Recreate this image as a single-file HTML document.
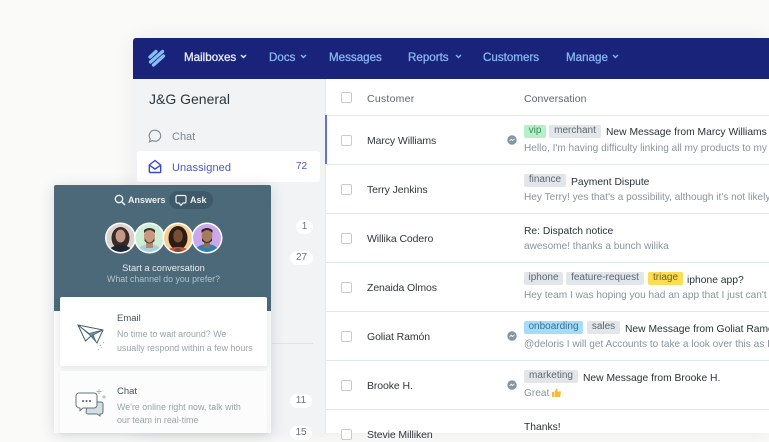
<!DOCTYPE html>
<html><head><meta charset="utf-8"><style>
html,body{margin:0;padding:0;background:#fafaf9}
body{width:769px;height:433px;overflow:hidden;background:#fafaf9;position:relative;font-family:"Liberation Sans",sans-serif;color:#2b3238}
.a{position:absolute;white-space:nowrap}
.nav{font-size:11.600px;color:#86b5f2;top:51px;line-height:14px;-webkit-text-stroke:.3px currentColor}
.cb{position:absolute;left:341px;width:9px;height:9px;border:1px solid #c6ccd2;border-radius:2px;background:#fff}
.name{position:absolute;left:367px;font-size:10.500px;letter-spacing:-.1px;color:#30373d;line-height:14px;white-space:nowrap}
.line{position:absolute;left:325px;width:444px;height:1px;background:#e3e8ec}
.tag{position:absolute;height:13px;line-height:12px;font-size:10px;border-radius:2px;background:#e2e6ea;color:#5d6870;text-align:center;white-space:nowrap}
.subj{position:absolute;font-size:10.300px;color:#2b3238;line-height:15px;white-space:nowrap}
.prev{position:absolute;left:524px;font-size:10.100px;color:#8a949c;line-height:14px;white-space:nowrap}
.pill{position:absolute;height:14px;line-height:14px;background:#fff;border-radius:7px;font-size:10px;color:#6a747c;text-align:center}
.ms{position:absolute;left:507px}
.card{position:absolute;left:60px;width:207px;background:#fff;border-radius:2px}
</style></head><body>

<!-- window -->
<div class="a" style="left:133px;top:38px;width:636px;height:395px;background:#fff;box-shadow:0 0 18px rgba(40,50,70,.08);border-radius:3px 0 0 0"></div>
<div class="a" style="left:133px;top:38px;width:636px;height:41px;background:#1a237a;border-radius:3px 0 0 0"></div>
<svg class="a" style="left:148px;top:49px" width="18" height="18" viewBox="0 0 18 18"><path d="M2 8 8 2.500M2.500 13 14.500 2.500M5.500 16 15.500 7" stroke="#86bdf7" stroke-width="3.300" stroke-linecap="round" fill="none"/></svg>

<div class="a nav" style="left:184px;color:#e6eefc">Mailboxes</div>
<svg class="a" style="left:240px;top:54px" width="7" height="5"><path d="M1 1l2.500 2.500L6 1" stroke="#e6eefc" stroke-width="1.400" fill="none"/></svg>
<div class="a nav" style="left:269px">Docs</div>
<svg class="a" style="left:300px;top:54px" width="7" height="5"><path d="M1 1l2.500 2.500L6 1" stroke="#86b5f2" stroke-width="1.400" fill="none"/></svg>
<div class="a nav" style="left:329px">Messages</div>
<div class="a nav" style="left:408px">Reports</div>
<svg class="a" style="left:455px;top:54px" width="7" height="5"><path d="M1 1l2.500 2.500L6 1" stroke="#86b5f2" stroke-width="1.400" fill="none"/></svg>
<div class="a nav" style="left:483px">Customers</div>
<div class="a nav" style="left:566px">Manage</div>
<svg class="a" style="left:612px;top:54px" width="7" height="5"><path d="M1 1l2.500 2.500L6 1" stroke="#86b5f2" stroke-width="1.400" fill="none"/></svg>

<!-- sidebar -->
<div class="a" style="left:133px;top:79px;width:192px;height:354px;background:#f1f3f5"></div>
<div class="a" style="left:149px;top:91px;font-size:14px;line-height:17px;color:#2d3439">J&amp;G General</div>
<svg class="a" style="left:148px;top:129px" width="14" height="14" viewBox="0 0 14 14"><path d="M7 1.200a5.700 5.500 0 1 1-2.600 10.400L1.500 12.800l.7-3A5.500 5.500 0 0 1 7 1.200z" fill="none" stroke="#7c868e" stroke-width="1.100"/></svg>
<div class="a" style="left:172px;top:130px;font-size:11px;line-height:14px;color:#7f888f">Chat</div>
<div class="a" style="left:137px;top:151px;width:183px;height:31px;background:#fff;border-radius:3px"></div>
<svg class="a" style="left:148px;top:159px" width="14" height="15" viewBox="0 0 14 15"><path d="M1.300 6 7 1.500 12.700 6v6.500a1 1 0 0 1-1 1H2.300a1 1 0 0 1-1-1zM1.500 6.300 7 10l5.500-3.700" fill="none" stroke="#3b49c4" stroke-width="1.400" stroke-linejoin="round"/></svg>
<div class="a" style="left:172px;top:161px;font-size:11px;line-height:14px;color:#4a57c9;letter-spacing:.1px">Unassigned</div>
<div class="a" style="left:296px;top:160px;font-size:10px;line-height:14px;color:#4a57c9">72</div>
<div class="pill" style="left:296px;top:220px;width:17px">1</div>
<div class="pill" style="left:290px;top:251px;width:23px">27</div>
<div class="a" style="left:272px;top:343px;width:41px;height:1px;background:#dfe3e7"></div>
<div class="pill" style="left:290px;top:394px;width:22px">11</div>
<div class="pill" style="left:290px;top:426px;width:22px">15</div>

<!-- table -->
<div class="a" style="left:325px;top:79px;width:1px;height:354px;background:#e3e8ec"></div>
<div class="cb" style="top:92px"></div>
<div class="a" style="left:367px;top:92px;font-size:10.500px;line-height:14px;color:#5c666e;letter-spacing:.25px">Customer</div>
<div class="a" style="left:524px;top:92px;font-size:10.500px;line-height:14px;color:#5c666e;letter-spacing:.05px">Conversation</div>
<div class="line" style="top:115px"></div>
<div class="line" style="top:164px"></div>
<div class="line" style="top:213px"></div>
<div class="line" style="top:262px"></div>
<div class="line" style="top:311px"></div>
<div class="line" style="top:360px"></div>
<div class="line" style="top:409px"></div>
<div class="a" style="left:325px;top:115px;width:2px;height:49px;background:#6472d6"></div>

<div class="cb" style="top:135px"></div><div class="name" style="top:134px">Marcy Williams</div>
<div class="cb" style="top:184px"></div><div class="name" style="top:183px">Terry Jenkins</div>
<div class="cb" style="top:233px"></div><div class="name" style="top:232px">Willika Codero</div>
<div class="cb" style="top:282px"></div><div class="name" style="top:281px">Zenaida Olmos</div>
<div class="cb" style="top:331px"></div><div class="name" style="top:330px">Goliat Ramón</div>
<div class="cb" style="top:380px"></div><div class="name" style="top:379px">Brooke H.</div>
<div class="cb" style="top:429px"></div><div class="name" style="top:428px">Stevie Milliken</div>

<svg class="ms" style="top:135px" width="10" height="10" viewBox="0 0 10 10"><circle cx="5" cy="5" r="4.700" fill="#8495a6"/><path d="M2.300 6 4.300 3.800 5.700 5 7.700 3.800 5.700 6 4.300 4.900z" fill="#fff" stroke="#fff" stroke-width=".4"/></svg>
<svg class="ms" style="top:331px" width="10" height="10" viewBox="0 0 10 10"><circle cx="5" cy="5" r="4.700" fill="#8495a6"/><path d="M2.300 6 4.300 3.800 5.700 5 7.700 3.800 5.700 6 4.300 4.900z" fill="#fff" stroke="#fff" stroke-width=".4"/></svg>
<svg class="ms" style="top:380px" width="10" height="10" viewBox="0 0 10 10"><circle cx="5" cy="5" r="4.700" fill="#8495a6"/><path d="M2.300 6 4.300 3.800 5.700 5 7.700 3.800 5.700 6 4.300 4.900z" fill="#fff" stroke="#fff" stroke-width=".4"/></svg>

<div class="tag" style="left:524px;top:125px;width:22px;background:#b4f1c8;color:#3f8a5c">vip</div>
<div class="tag" style="left:549px;top:125px;width:52px">merchant</div>
<div class="subj" style="left:606px;top:125px">New Message from Marcy Williams</div>
<div class="prev" style="top:142px">Hello, I'm having difficulty linking all my products to my</div>

<div class="tag" style="left:524px;top:174px;width:42px">finance</div>
<div class="subj" style="left:571px;top:175px">Payment Dispute</div>
<div class="prev" style="top:191px">Hey Terry! yes that's a possibility, although it's not likely</div>

<div class="subj" style="left:524px;top:224px">Re: Dispatch notice</div>
<div class="prev" style="top:240px">awesome! thanks a bunch wilika</div>

<div class="tag" style="left:524px;top:272px;width:39px">iphone</div>
<div class="tag" style="left:566px;top:272px;width:78px">feature-request</div>
<div class="tag" style="left:648px;top:272px;width:35px;background:#fbdc52;color:#6d6226">triage</div>
<div class="subj" style="left:687px;top:273px">iphone app?</div>
<div class="prev" style="top:289px">Hey team I was hoping you had an app that I just can't f</div>

<div class="tag" style="left:524px;top:321px;width:59px;background:#a6dcfb;color:#3c6f8f">onboarding</div>
<div class="tag" style="left:587px;top:321px;width:33px">sales</div>
<div class="subj" style="left:625px;top:322px">New Message from Goliat Ramón</div>
<div class="prev" style="top:338px">@deloris I will get Accounts to take a look over this as I</div>

<div class="tag" style="left:524px;top:370px;width:54px">marketing</div>
<div class="subj" style="left:583px;top:371px">New Message from Brooke H.</div>
<div class="prev" style="top:387px">Great</div>
<svg class="a" style="left:551px;top:387px" width="11" height="11" viewBox="0 0 11 11"><path d="M1 5h2v5H1zM3.500 5 5.500 1.500c1 0 1.300.8 1 2L6.300 4.500H10l-.8 5.500H3.500z" fill="#f5b93f"/></svg>

<div class="subj" style="left:524px;top:420px">Thanks!</div>

<!-- widget -->
<div class="a" style="left:54px;top:185px;width:217px;height:248px;background:#f9fafa;border-radius:2px 2px 0 0;box-shadow:0 2px 14px rgba(40,50,60,.16)"></div>
<div class="a" style="left:54px;top:185px;width:217px;height:126px;background:#4b6978;border-radius:2px 2px 0 0"></div>
<div class="a" style="left:169px;top:191px;width:44px;height:18px;background:#3e5a68;border-radius:9px"></div>
<svg class="a" style="left:114px;top:194px" width="12" height="12" viewBox="0 0 12 12"><circle cx="5" cy="5" r="3.700" fill="none" stroke="#eef3f5" stroke-width="1.300"/><path d="M8 8l3 3" stroke="#eef3f5" stroke-width="1.500"/></svg>
<div class="a" style="left:128px;top:194px;font-size:9px;font-weight:bold;line-height:12px;color:#eaf0f2">Answers</div>
<svg class="a" style="left:175px;top:194px" width="12" height="13" viewBox="0 0 12 13"><path d="M2.500 1.500h7a1.500 1.500 0 0 1 1.500 1.500v4.500A1.500 1.500 0 0 1 9.500 9H8L6 11.300 4 9H2.500A1.500 1.500 0 0 1 1 7.500V3a1.500 1.500 0 0 1 1.500-1.500z" fill="none" stroke="#eef3f5" stroke-width="1.200"/></svg>
<div class="a" style="left:190px;top:194px;font-size:9px;font-weight:bold;line-height:12px;color:#eaf0f2">Ask</div>

<svg class="a" style="left:100px;top:218px" width="130" height="40" viewBox="0 0 130 40">
<defs>
<clipPath id="c1"><circle cx="20.500" cy="20" r="14"/></clipPath>
<clipPath id="c2"><circle cx="49.500" cy="20" r="14"/></clipPath>
<clipPath id="c3"><circle cx="78" cy="20" r="14"/></clipPath>
<clipPath id="c4"><circle cx="107" cy="20" r="14"/></clipPath>
</defs>
<circle cx="20.500" cy="20" r="15.500" fill="#fff"/>
<g clip-path="url(#c1)"><rect x="5" y="5" width="32" height="30" fill="#d9d2cf"/><ellipse cx="20.500" cy="20" rx="9" ry="11" fill="#3a2a26"/><ellipse cx="20.500" cy="18" rx="5" ry="6.500" fill="#c49a86"/><ellipse cx="20.500" cy="36" rx="13" ry="9" fill="#1c2430"/></g>
<circle cx="49.500" cy="20" r="15.500" fill="#fff"/>
<g clip-path="url(#c2)"><rect x="35" y="5" width="32" height="30" fill="#cdeed6"/><ellipse cx="49.500" cy="36" rx="13" ry="10" fill="#a5d0e0"/><rect x="46" y="22" width="7" height="8" fill="#b98a72"/><ellipse cx="49.500" cy="18" rx="5.500" ry="7" fill="#c89a80"/><path d="M44 15q5.500-6 11 0v-3q-5.500-4-11 0z" fill="#3f332c"/><path d="M44.500 20q5 9 10 0v3q-5 5-10 0z" fill="#54443a"/></g>
<circle cx="78" cy="20" r="15.500" fill="#fff"/>
<g clip-path="url(#c3)"><rect x="63" y="5" width="32" height="30" fill="#fbd08d"/><ellipse cx="78" cy="20" rx="9.500" ry="12" fill="#2a1d18"/><ellipse cx="78" cy="18" rx="4.800" ry="6.500" fill="#7a4c34"/><ellipse cx="78" cy="37" rx="14" ry="8" fill="#d8512f"/><ellipse cx="78" cy="36" rx="5" ry="6" fill="#7a4c34"/></g>
<circle cx="107" cy="20" r="15.500" fill="#fff"/>
<g clip-path="url(#c4)"><rect x="92" y="5" width="32" height="30" fill="#cba8ee"/><ellipse cx="107" cy="36" rx="13" ry="10" fill="#2d83ab"/><rect x="104" y="23" width="6" height="7" fill="#996a50"/><ellipse cx="107" cy="18" rx="5.300" ry="7" fill="#a87a5e"/><path d="M101.500 15q5.500-6 11 0v-3q-5.500-4-11 0z" fill="#2c2522"/><path d="M102 20q5 8 10 0v3q-5 4-10 0z" fill="#3b2f2a"/></g>
</svg>

<div class="a" style="left:54px;top:262px;width:219px;text-align:center;font-size:9.300px;line-height:13px;color:#e6ecef">Start a conversation</div>
<div class="a" style="left:54px;top:273px;width:219px;text-align:center;font-size:8.800px;line-height:12px;color:#b3c2ca">What channel do you prefer?</div>

<div class="card" style="top:297px;height:69px;box-shadow:0 2px 6px rgba(40,50,60,.1)"></div>
<div class="card" style="top:371px;height:62px;background:#fcfcfd;box-shadow:0 1px 5px rgba(40,50,60,.06)"></div>

<svg class="a" style="left:76px;top:322px" width="32" height="30" viewBox="0 0 32 30">
<path d="M2 3 27 8 21 21 15 14 9.500 19z" fill="#fff" stroke="#45606e" stroke-width="1"/>
<path d="M2 3 15 14 27 8 13 11.500z" fill="#7d95a2" stroke="#45606e" stroke-width=".8"/>
<path d="M15 14 21 21 17.500 12.500z" fill="#5e7a88"/>
<path d="M24 24l1-1M27 21l1-1M22 28l.6-.8M25 26l.6-.6" stroke="#9aabb4" stroke-width="1"/>
</svg>
<svg class="a" style="left:74px;top:387px" width="36" height="30" viewBox="0 0 36 30">
<path d="M14 15h13a2 2 0 0 1 2 2v8a2 2 0 0 1-2 2h-1v2l-3-2h-9a2 2 0 0 1-2-2z" fill="#d5dde2" stroke="#5b7482" stroke-width="1"/>
<path d="M5 6h15a3 3 0 0 1 3 3v9a3 3 0 0 1-3 3H9l-3 2.500V21A4 4 0 0 1 2 18V9a3 3 0 0 1 3-3z" fill="#fff" stroke="#5b7482" stroke-width="1"/>
<circle cx="9" cy="14" r="1" fill="#45606e"/><circle cx="12.500" cy="14" r="1" fill="#45606e"/><circle cx="16" cy="14" r="1" fill="#45606e"/>
<path d="M25 2v5M22.500 4.500h5M30 8v4M28 10h4" stroke="#a8b6be" stroke-width=".9"/>
</svg>

<div class="a" style="left:117px;top:313px;font-size:9.500px;line-height:12px;color:#4a545b">Email</div>
<div class="a" style="left:117px;top:328px;font-size:8.900px;line-height:13px;color:#9aa3a9">No time to wait around? We</div>
<div class="a" style="left:117px;top:342px;font-size:8.900px;line-height:13px;color:#9aa3a9">usually respond within a few hours</div>
<div class="a" style="left:117px;top:386px;font-size:9.500px;line-height:12px;color:#4a545b">Chat</div>
<div class="a" style="left:117px;top:401px;font-size:8.900px;line-height:13px;color:#9aa3a9">We're online right now, talk with</div>
<div class="a" style="left:117px;top:414px;font-size:8.900px;line-height:13px;color:#9aa3a9">our team in real-time</div>

</body></html>
